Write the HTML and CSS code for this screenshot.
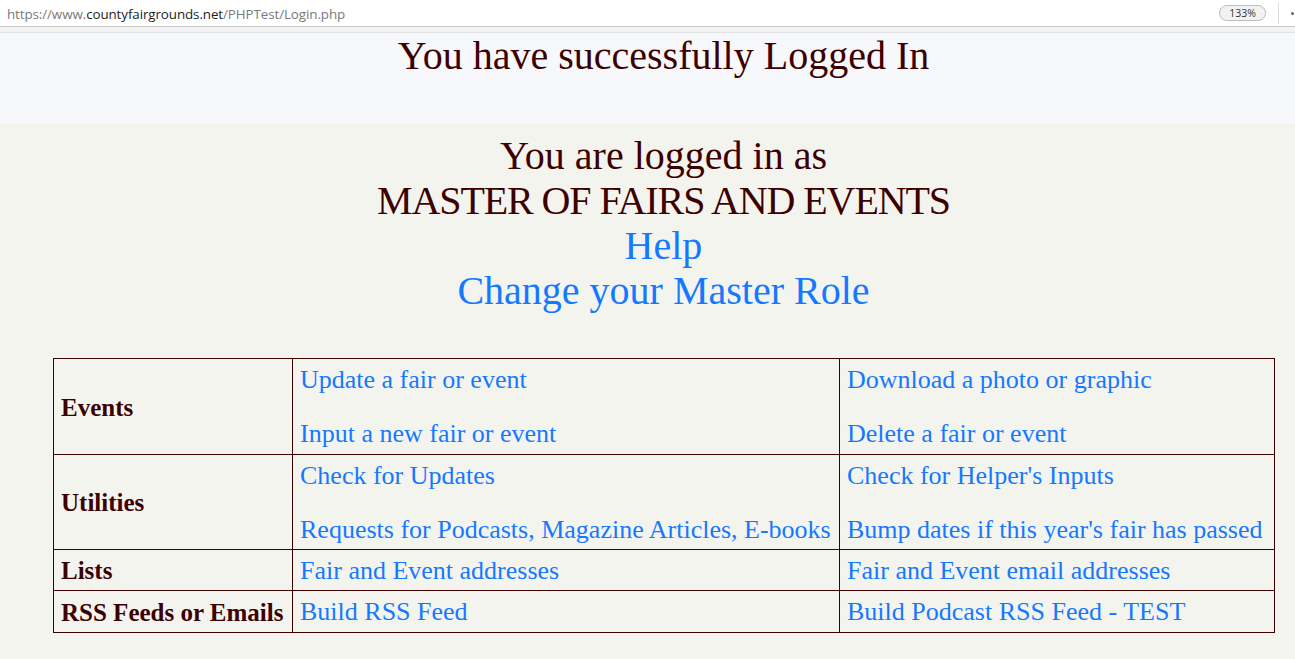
FILE: index.html
```html
<!DOCTYPE html>
<html lang="en">
<head>
<meta charset="utf-8">
<title>Login</title>
<link rel="stylesheet" href="styles.css">
</head>
<body>
<div class="browserbar">
  <div class="url"><span class="dim">https://www.</span><span class="host">countyfairgrounds.net</span><span class="dim">/PHPTest/Login.php</span></div>
  <div class="bar-right">
    <span class="zoom-pill">133%</span>
    <span class="bar-sep"></span>
    <span class="bar-dot"></span>
  </div>
</div>
<div class="bar-band"></div>

<header class="top">
  <h1 class="title">You have successfully Logged In</h1>
</header>

<main class="main">
  <div class="roleblock">
    <div>You are logged in as</div>
    <div class="role">MASTER OF FAIRS AND EVENTS</div>
    <div><a href="#">Help</a></div>
    <div><a href="#">Change your Master Role</a></div>
  </div>

  <div class="tablewrap">
    <table class="menu">
      <colgroup>
        <col class="c1"><col class="c2"><col class="c3">
      </colgroup>
      <tr class="tall">
        <th>Events</th>
        <td><a href="#">Update a fair or event</a><br><br><a href="#">Input a new fair or event</a></td>
        <td><a href="#">Download a photo or graphic</a><br><br><a href="#">Delete a fair or event</a></td>
      </tr>
      <tr>
        <th>Utilities</th>
        <td><a href="#">Check for Updates</a><br><br><a href="#">Requests for Podcasts, Magazine Articles, E-books</a></td>
        <td><a href="#">Check for Helper's Inputs</a><br><br><a href="#">Bump dates if this year's fair has passed</a></td>
      </tr>
      <tr>
        <th>Lists</th>
        <td><a href="#">Fair and Event addresses</a></td>
        <td><a href="#">Fair and Event email addresses</a></td>
      </tr>
      <tr class="tall">
        <th>RSS Feeds or Emails</th>
        <td><a href="#">Build RSS Feed</a></td>
        <td><a href="#">Build Podcast RSS Feed - TEST</a></td>
      </tr>
    </table>
  </div>
</main>
</body>
</html>
```

FILE: styles.css
```css
html, body {
  margin: 0;
  padding: 0;
}
body {
  background: #f4f4ef;
  font-family: "Liberation Serif", "Times New Roman", serif;
  color: #3d0000;
  overflow: hidden;
}

.browserbar {
  height: 26px;
  background: #ffffff;
  border-bottom: 1px solid #c9c9c9;
  display: flex;
  align-items: center;
  justify-content: space-between;
  padding-left: 7px;
  font-family: "Open Sans", "Noto Sans", sans-serif;
}
.url {
  font-size: 13.4px;
  letter-spacing: -0.1px;
  color: #222;
  padding-top: 1px;
}
.url .dim { color: #7a7a7a; }
.url .host { color: #1e1e1e; }
.bar-right {
  display: flex;
  align-items: center;
  height: 100%;
}
.zoom-pill {
  font-size: 10.5px;
  color: #333;
  background: #f2f2f2;
  border: 1px solid #bdbdbd;
  border-radius: 8px;
  height: 14px;
  line-height: 14px;
  padding: 0 9px;
  margin-right: 12px;
}
.bar-sep {
  width: 1px;
  height: 22px;
  background: #dedede;
  margin-right: 12px;
}
.bar-dot {
  width: 3px;
  height: 3px;
  border-radius: 50%;
  background: #666;
  margin-right: 1px;
}
.bar-band {
  height: 5px;
  background: #f3f3f3;
  border-bottom: 1px solid #e4e4e4;
}

.top {
  background: #f7f8fb;
  height: 91px;
  padding-left: 32px;
}
.title {
  margin: 0;
  font-weight: normal;
  font-size: 40px;
  line-height: 45px;
  text-align: center;
  color: #3d0000;
}

.main {
  padding-top: 9px;
}
.roleblock {
  text-align: center;
  font-size: 40px;
  line-height: 45px;
  padding-left: 32px;
}
.role {
  letter-spacing: -1.1px;
}
a {
  color: #1479ff;
  text-decoration: none;
}

.tablewrap {
  padding: 45px 20px 0 53px;
}
.menu {
  width: 1221px;
  table-layout: fixed;
  border-collapse: collapse;
  font-size: 26px;
  line-height: 27px;
}
.menu .c1 { width: 239px; }
.menu .c2 { width: 547px; }
.menu .c3 { width: 435px; }
.menu th,
.menu td {
  border: 1px solid #3d0000;
  padding: 7px 7px 6px 7px;
  text-align: left;
}
.menu th {
  font-size: 25px;
  font-weight: bold;
  vertical-align: middle;
  color: #3d0000;
  white-space: nowrap;
}
.menu td {
  vertical-align: top;
  white-space: nowrap;
}
.menu tr.tall td {
  padding-bottom: 7px;
}
```
